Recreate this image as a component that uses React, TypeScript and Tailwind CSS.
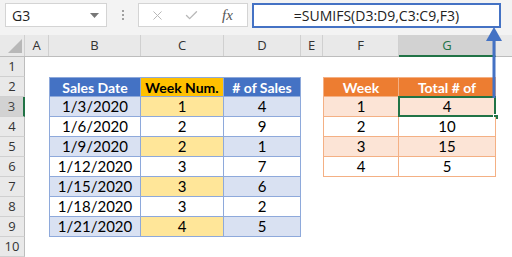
import React from 'react'
import { X, Check } from 'lucide-react'

const sales = [
  ['1/3/2020', '1', '4'],
  ['1/6/2020', '2', '9'],
  ['1/9/2020', '2', '1'],
  ['1/12/2020', '3', '7'],
  ['1/15/2020', '3', '6'],
  ['1/18/2020', '3', '2'],
  ['1/21/2020', '4', '5'],
]

const totals = [
  ['1', '4'],
  ['2', '10'],
  ['3', '15'],
  ['4', '5'],
]

function FormulaBar() {
  return (
    <div className="flex h-[35px] items-start bg-[#f3f3f3] pt-[3px] font-['Open_Sans']">
      <div className="ml-[5px] flex h-[24px] w-[102px] items-center justify-between border border-[#d4d4d4] bg-white pl-[6px] pr-[7px] text-[14px] text-[#222]">
        <span>G3</span>
        <svg width="9" height="5" viewBox="0 0 9 5"><path d="M0 0h9L4.5 5z" fill="#777" /></svg>
      </div>
      <div className="flex h-[24px] w-[31px] flex-col items-center justify-center gap-[2px]">
        <span className="h-[2px] w-[2px] bg-[#a0a0a0]" />
        <span className="h-[2px] w-[2px] bg-[#a0a0a0]" />
        <span className="h-[2px] w-[2px] bg-[#a0a0a0]" />
      </div>
      <div className="flex h-[24px] w-[110px] items-center border border-[#d4d4d4] bg-white">
        <X size={15} strokeWidth={1.6} className="ml-[11px] text-[#b8b8b8]" />
        <Check size={15} strokeWidth={2.2} className="ml-[19px] text-[#b8b8b8]" />
        <span className="ml-[23px] font-['Liberation_Serif'] text-[15px] italic text-[#555]">fx</span>
      </div>
      <div className="ml-[4px] flex h-[25px] w-[249px] items-center justify-center border-2 border-[#4472c4] bg-white text-[14px] text-[#222]">
        =SUMIFS(D3:D9,C3:C9,F3)
      </div>
    </div>
  )
}

function ColumnHeaders() {
  const hd = "flex h-full items-center justify-center border-r border-[#d0d0d0]"
  return (
    <div className="flex h-[22px] border-b border-[#bdbdbd] bg-[#e9e9e9] font-['Open_Sans'] text-[13px] text-[#333]">
      <div className="relative h-full w-[25px] border-r border-[#d0d0d0]">
        <svg className="absolute left-[8px] top-[4px]" width="14" height="14" viewBox="0 0 14 14"><path d="M14 0v14H0z" fill="#b8b8b8" /></svg>
      </div>
      <div className={hd + " w-[24px]"}>A</div>
      <div className={hd + " w-[92px]"}>B</div>
      <div className={hd + " w-[83px]"}>C</div>
      <div className={hd + " w-[77px]"}>D</div>
      <div className={hd + " w-[22px]"}>E</div>
      <div className={hd + " w-[76px]"}>F</div>
      <div className="flex h-[22px] w-[97px] items-center justify-center border-b-2 border-r border-b-[#217346] border-r-[#d0d0d0] bg-[#d2d2d2] pt-[2px] text-[#217346]">G</div>
      <div className="flex-1" />
    </div>
  )
}

function RowHeader({ n }: { n: number }) {
  const active = n === 3
  return (
    <div
      className={
        active
          ? "flex h-full w-[25px] items-center justify-center border-b border-r-2 border-b-[#d0d0d0] border-r-[#217346] bg-[#d2d2d2] font-['Open_Sans'] text-[13px] text-[#444]"
          : "flex h-full w-[25px] items-center justify-center border-b border-r border-b-[#d0d0d0] border-r-[#bdbdbd] bg-[#e9e9e9] font-['Open_Sans'] text-[13px] text-[#333]"
      }
    >
      {n}
    </div>
  )
}

function Row({ n }: { n: number }) {
  const c1 = "flex h-full items-center justify-center border-b border-r border-[#8ea9db]"
  const c2 = "flex h-full items-center justify-center border-b border-r border-[#f4b084]"
  const s = n >= 3 && n <= 9 ? sales[n - 3] : null
  const t = n >= 3 && n <= 6 ? totals[n - 3] : null
  const odd = n % 2 === 1

  return (
    <div className="flex h-[20px] text-[15px] text-black">
      <RowHeader n={n} />
      <div className="w-[24px]" />
      {n === 2 ? (
        <>
          <div className={c1 + " w-[92px] border-l border-t bg-[#4472c4] text-[14px] font-bold text-white"}>Sales Date</div>
          <div className={c1 + " w-[83px] border-t bg-[#ffc000] text-[14px] font-bold"}>Week Num.</div>
          <div className={c1 + " w-[77px] border-t bg-[#4472c4] text-[14px] font-bold text-white"}># of Sales</div>
        </>
      ) : s ? (
        <>
          <div className={c1 + " w-[92px] border-l " + (odd ? "bg-[#d9e1f2]" : "bg-white")}>{s[0]}</div>
          <div className={c1 + " w-[83px] " + (odd ? "bg-[#ffe699]" : "bg-white")}>{s[1]}</div>
          <div className={c1 + " w-[77px] " + (odd ? "bg-[#d9e1f2]" : "bg-white")}>{s[2]}</div>
        </>
      ) : (
        <div className="w-[252px]" />
      )}
      <div className="w-[22px]" />
      {n === 2 ? (
        <>
          <div className={c2 + " w-[76px] border-l border-t bg-[#ed7d31] text-[14px] font-bold text-white"}>Week</div>
          <div className={c2 + " w-[97px] border-t bg-[#ed7d31] text-[14px] font-bold text-white"}>Total # of</div>
        </>
      ) : t ? (
        <>
          <div className={c2 + " w-[76px] border-l " + (odd ? "bg-[#fce4d6]" : "bg-white")}>{t[0]}</div>
          <div className={c2 + " relative w-[97px] " + (odd ? "bg-[#fce4d6]" : "bg-white")}>
            {t[1]}
            {n === 3 && (
              <>
                <div className="absolute left-[-1px] top-[-1px] h-[21px] w-[98px] border-2 border-[#217346]" />
                <div className="absolute right-[-4px] bottom-[-4px] h-[6px] w-[6px] border border-white bg-[#217346]" />
              </>
            )}
          </div>
        </>
      ) : null}
    </div>
  )
}

export default function App() {
  return (
    <div className="relative h-[257px] w-[512px] overflow-hidden bg-white font-['Lato']">
      <FormulaBar />
      <ColumnHeaders />
      {[1, 2, 3, 4, 5, 6, 7, 8, 9, 10].map((n) => (
        <Row key={n} n={n} />
      ))}
      <svg className="absolute left-[484px] top-[26px]" width="20" height="72" viewBox="0 0 20 72">
        <path d="M10 1L2 15h16z" fill="#4472c4" />
        <rect x="8.5" y="14" width="3" height="58" fill="#4472c4" />
      </svg>
    </div>
  )
}
